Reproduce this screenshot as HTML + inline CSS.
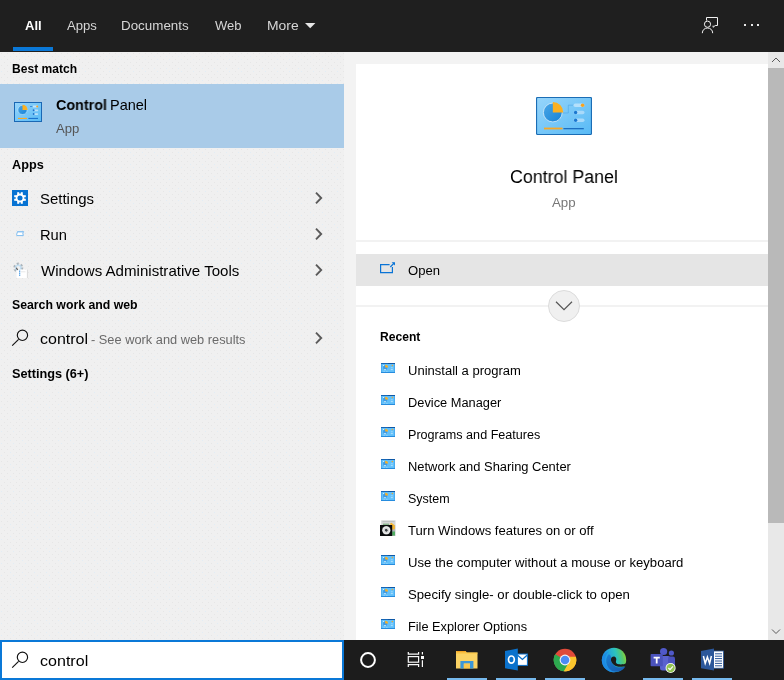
<!DOCTYPE html>
<html><head><meta charset="utf-8">
<style>
*{box-sizing:border-box;margin:0;padding:0}
html,body{width:784px;height:680px;overflow:hidden;background:#f2f2f2;font-family:"Liberation Sans",sans-serif;color:#000}
.abs{position:absolute}
svg{position:absolute;overflow:visible}
#hdr{position:absolute;left:0;top:0;width:784px;height:52px;background:#1f1f1f}
.t{will-change:transform;position:absolute;white-space:nowrap;line-height:1;transform-origin:0 0}
.tab{font-size:13.5px;color:#d8d8d8;top:19px}
#left{position:absolute;left:0;top:52px;width:344px;height:588px;background:#f0f0f0}
#right{position:absolute;left:344px;top:52px;width:440px;height:588px;background:#f3f3f3}
#card{position:absolute;left:356px;top:64px;width:412px;height:576px;background:#fff}
.sec{font-size:13px;font-weight:bold;color:#111;left:12px}
.item{font-size:15px;color:#111;left:40px}
.rec{font-size:13px;color:#111;left:408px}
#task{position:absolute;left:0;top:640px;width:784px;height:40px;background:#1c1c1c}
.ul{position:absolute;top:678px;height:2px;width:40px;background:#76b9ed}
</style></head><body>
<div id="hdr"></div>
<div class="abs" style="left:13px;top:47px;width:40px;height:4px;background:#0a78d7"></div>
<svg style="left:304.6px;top:23px" width="10.4" height="5.2"><path d="M0 0H10.4L5.2 5.2Z" fill="#e6e6e6"/></svg>
<!-- feedback icon -->
<svg style="left:700px;top:14px" width="22" height="22" fill="none" stroke="#f0f0f0" stroke-width="1"><path d="M6.5 6.6V3.5H17.5V11.5H15.2L13.1 13.3V11.6"/><circle cx="7.5" cy="10.2" r="3.1"/><path d="M2.3 19.2C2.3 16 4.6 14 7.5 14C10.4 14 12.7 16 12.7 19.2"/></svg>
<div class="abs" style="left:744px;top:24px;width:2px;height:2px;background:#e8e8e8"></div>
<div class="abs" style="left:751px;top:24px;width:2px;height:2px;background:#e8e8e8"></div>
<div class="abs" style="left:757px;top:24px;width:2px;height:2px;background:#e8e8e8"></div>

<div id="left"></div>
<svg style="left:0;top:52px" width="344" height="588"><defs><pattern id="nz" width="12" height="12" patternUnits="userSpaceOnUse"><rect x="1" y="1" width="1" height="1" fill="#e6e6e6"/><rect x="7" y="1" width="1" height="1" fill="#e6e6e6"/><rect x="4" y="4" width="1" height="1" fill="#e6e6e6"/><rect x="10" y="4" width="1" height="1" fill="#e2edf5"/><rect x="1" y="7" width="1" height="1" fill="#e2edf5"/><rect x="7" y="7" width="1" height="1" fill="#e6e6e6"/><rect x="4" y="10" width="1" height="1" fill="#e6e6e6"/><rect x="10" y="10" width="1" height="1" fill="#e6e6e6"/></pattern></defs><rect width="344" height="588" fill="url(#nz)"/></svg>
<div id="right"></div>
<div id="card"></div>

<!-- left column -->
<div class="abs" style="left:0;top:84px;width:344px;height:64px;background:#a9cbe8"></div>

<!-- chevrons -->
<svg style="left:314px;top:191px" width="10" height="14" fill="none" stroke="#5a5a5a" stroke-width="1.9"><path d="M2 1.7L7.2 7L2 12.3"/></svg>
<svg style="left:314px;top:227px" width="10" height="14" fill="none" stroke="#5a5a5a" stroke-width="1.9"><path d="M2 1.7L7.2 7L2 12.3"/></svg>
<svg style="left:314px;top:263px" width="10" height="14" fill="none" stroke="#5a5a5a" stroke-width="1.9"><path d="M2 1.7L7.2 7L2 12.3"/></svg>
<svg style="left:314px;top:331px" width="10" height="14" fill="none" stroke="#5a5a5a" stroke-width="1.9"><path d="M2 1.7L7.2 7L2 12.3"/></svg>

<!-- right card -->
<div class="abs" style="left:356px;top:240px;width:412px;height:2px;background:#f2f2f2"></div>
<div class="abs" style="left:356px;top:254px;width:412px;height:32px;background:#e5e5e5"></div>
<div class="abs" style="left:356px;top:305px;width:412px;height:2px;background:#f2f2f2"></div>
<div class="abs" style="left:548px;top:290px;width:32px;height:32px;border-radius:50%;background:#f0f0f0;border:1px solid #dcdcdc"></div>
<svg style="left:555px;top:300px" width="18" height="12" fill="none" stroke="#555" stroke-width="1.2"><path d="M1 1.8L9 9.6L17 1.8"/></svg>

<svg width="0" height="0" style="left:0;top:0"><defs>
<linearGradient id="cpg" x1="0" y1="0" x2="1" y2="1"><stop offset="0" stop-color="#97d5fb"/><stop offset="1" stop-color="#58baf5"/></linearGradient>
<linearGradient id="pieg" x1="0" y1="0" x2="1" y2="1"><stop offset="0" stop-color="#4aa6e6"/><stop offset="1" stop-color="#1783d8"/></linearGradient>
<symbol id="cp" viewBox="0 0 56 38">
<rect x="0.5" y="0.5" width="55" height="37" rx="1.2" fill="url(#cpg)" stroke="#1b6db5" stroke-width="1.2"/>
<path d="M26.5 16H32.3V8.2H38" fill="none" stroke="#4ea6e6" stroke-width="0.6"/>
<circle cx="16.8" cy="15.5" r="9.4" fill="url(#pieg)" stroke="#eaf4fb" stroke-width="0.7"/>
<path d="M16.8 15.5V5A10.5 10.5 0 0 1 27.3 15.5Z" fill="#fbb021"/>
<rect x="37.5" y="6.4" width="11" height="3.6" rx="1.8" fill="#b5e0fb"/>
<circle cx="46.6" cy="8.2" r="1.8" fill="#f9a31f"/>
<rect x="37.5" y="13.7" width="11" height="3.6" rx="1.8" fill="#a9dafa"/>
<circle cx="39.6" cy="15.5" r="1.7" fill="#1a77cf"/>
<rect x="37.5" y="21.5" width="11" height="3.6" rx="1.8" fill="#a9dafa"/>
<circle cx="39.6" cy="23.3" r="1.7" fill="#1a77cf"/>
<rect x="8" y="30.6" width="18.5" height="1.8" fill="#f9a825"/>
<rect x="27.4" y="31" width="20.4" height="1.3" fill="#1c6fc0"/>
</symbol>
<symbol id="cps" viewBox="0 0 14 10">
<rect x="0" y="0" width="14" height="10" fill="#3e9fe8"/>
<rect x="0.6" y="0.8" width="12.8" height="8.4" fill="#62c0fa"/>
<rect x="0" y="0" width="14" height="1" fill="#1565b5"/><rect x="7" y="0" width="7" height="1" fill="#0e58a6"/>
<rect x="0" y="9.1" width="14" height="0.9" fill="#2389dd"/>
<circle cx="4.2" cy="4.8" r="2.2" fill="#3d9be6"/>
<path d="M4.2 4.6V1.7A2.9 2.9 0 0 1 7.1 4.6Z" fill="#fbb021"/>
<circle cx="11.4" cy="2.6" r="0.75" fill="#f6a52a"/>
<rect x="2" y="2" width="0.9" height="0.9" fill="#e8f5fd"/>
<rect x="3" y="6.3" width="2" height="0.8" fill="#dff1fd"/>
<rect x="9.8" y="4.4" width="2" height="0.8" fill="#a9dcfb"/>
<rect x="9.8" y="6.3" width="2" height="0.8" fill="#c9e9fc"/>
<rect x="2.4" y="8" width="1.6" height="0.6" fill="#9bd6fb"/><rect x="5" y="8" width="1.6" height="0.6" fill="#9bd6fb"/>
</symbol>
<symbol id="cpm" viewBox="0 0 28 20">
<rect x="0.5" y="0.5" width="27" height="19" fill="url(#cpg)" stroke="#1a68b4" stroke-width="1"/>
<circle cx="8.5" cy="7.9" r="4.6" fill="url(#pieg)" stroke="#dff0fb" stroke-width="0.5"/>
<path d="M8.5 7.9V2.8A5.1 5.1 0 0 1 13.6 7.9Z" fill="#fbb021"/>
<rect x="18.6" y="3.6" width="5.6" height="1.8" rx="0.9" fill="#c4e6fb"/><circle cx="23.2" cy="4.5" r="1" fill="#f9a31f"/><rect x="16" y="4.1" width="2.4" height="0.8" fill="#2a80d4"/>
<rect x="18.6" y="7.4" width="5.6" height="1.8" rx="0.9" fill="#b9e1fb"/><circle cx="19.6" cy="8.3" r="1" fill="#1a72cc"/>
<rect x="18.6" y="11.2" width="5.6" height="1.8" rx="0.9" fill="#b9e1fb"/><circle cx="19.6" cy="12.1" r="1" fill="#1a72cc"/>
<rect x="4" y="15.9" width="9" height="1.1" fill="#f9a825"/><rect x="14.4" y="15.9" width="9.6" height="1.1" fill="#1b74cf"/>
</symbol>
</defs></svg>
<!-- control panel icons -->
<svg style="left:536px;top:97px" width="56" height="38"><use href="#cp"/></svg>
<svg style="left:14px;top:102px" width="28" height="20"><use href="#cpm"/></svg>
<svg style="left:381px;top:363px" width="14" height="10"><use href="#cps"/></svg>
<svg style="left:381px;top:395px" width="14" height="10"><use href="#cps"/></svg>
<svg style="left:381px;top:427px" width="14" height="10"><use href="#cps"/></svg>
<svg style="left:381px;top:459px" width="14" height="10"><use href="#cps"/></svg>
<svg style="left:381px;top:491px" width="14" height="10"><use href="#cps"/></svg>
<svg style="left:381px;top:555px" width="14" height="10"><use href="#cps"/></svg>
<svg style="left:381px;top:587px" width="14" height="10"><use href="#cps"/></svg>
<svg style="left:381px;top:619px" width="14" height="10"><use href="#cps"/></svg>
<!-- windows features icon -->
<svg style="left:380px;top:520px" width="16" height="16">
<defs><radialGradient id="dg"><stop offset="0.25" stop-color="#3a3f42"/><stop offset="0.36" stop-color="#c9cbcc"/><stop offset="0.8" stop-color="#eeeeee"/><stop offset="1" stop-color="#b9bcbd"/></radialGradient>
</defs>
<path d="M1.2 0.3H15.5V5H1.2Z" fill="#d4d6d6"/>
<path d="M2.5 1H14.5V2H2.5Z" fill="#bfc2c2"/>
<rect x="12" y="5" width="3.4" height="11" fill="#b4b8ba"/>
<rect x="3" y="3.6" width="6" height="1.4" fill="#6aa56c" opacity="0.7"/>
<path d="M9.5 4.2L11.3 2.8L13 4L14.8 5.5V9L12.2 9.8V5.2Z" fill="#f8b62a"/>
<rect x="12.2" y="11.5" width="2.8" height="4" fill="#3fae55" opacity="0.85"/>
<rect x="0" y="5" width="12.2" height="11" fill="#0b0d0e"/>
<circle cx="6.3" cy="10.3" r="4.2" fill="url(#dg)"/>
</svg>
<!-- left icons -->
<svg style="left:12px;top:190px" width="16" height="16">
<rect width="16" height="16" fill="#0773d3"/>
<g fill="#fff"><rect x="5.2" y="2.2" width="2" height="3.2"/><rect x="8.8" y="2.2" width="2" height="3.2"/><rect x="5.2" y="10.6" width="2" height="3.2"/><rect x="8.8" y="10.6" width="2" height="3.2"/><rect x="2.2" y="5.2" width="3.2" height="2"/><rect x="2.2" y="8.8" width="3.2" height="2"/><rect x="10.6" y="5.2" width="3.2" height="2"/><rect x="10.6" y="8.8" width="3.2" height="2"/></g>
<circle cx="8" cy="8" r="3.5" fill="none" stroke="#fff" stroke-width="1.8"/>
</svg>
<svg style="left:15px;top:229px" width="11" height="9">
<path d="M2.6 2.6H8.6L7.8 4L8.3 6.6H1.8L1.7 5.2Z" fill="#ffffff" stroke="#7dbcf0" stroke-width="1" stroke-linejoin="round"/>
<path d="M2.4 2.8H8.4" stroke="#8ec4f2" stroke-width="1.2"/>
</svg>
<svg style="left:12px;top:262px" width="17" height="17">
<circle cx="6.3" cy="5.6" r="3.8" fill="none" stroke="#9aa5ae" stroke-width="2.4" stroke-dasharray="2 1.98" opacity="0.8"/>
<circle cx="6.3" cy="5.8" r="2.6" fill="none" stroke="#b9dcf4" stroke-width="1.4" opacity="0.8"/>
<rect x="4.6" y="7.6" width="11" height="8.4" fill="#fff"/>
<path d="M15.4 7.6V16" stroke="#d0d0d0" stroke-width="0.8"/>
<path d="M4.3 5.8L5.6 8" stroke="#555" stroke-width="1.2"/>
<rect x="7" y="8.6" width="1.3" height="1.1" fill="#2a8ae0"/><rect x="7" y="10.6" width="1.3" height="1.1" fill="#2a8ae0"/><rect x="7" y="12.6" width="1.3" height="1.1" fill="#2a8ae0"/>
<path d="M9 9.8H13.5" stroke="#ddd" stroke-width="0.7"/>
</svg>
<svg style="left:10px;top:328px" width="20" height="20" fill="none" stroke="#111" stroke-width="1.15"><circle cx="12.45" cy="7.3" r="5.15"/><path d="M8.6 11.3L2.2 17.6"/></svg>
<!-- open icon -->
<svg style="left:379px;top:261px" width="18" height="14"><path d="M10.6 3.6H1.6V11.7H13.4V6" fill="none" stroke="#0a74d6" stroke-width="1.2"/><path d="M11.3 6L15.2 2" stroke="#0a74d6" stroke-width="1.1"/><path d="M12.6 1.2H16V4.6Z" fill="#0a74d6"/></svg>
<!-- scrollbar -->
<div class="abs" style="left:768px;top:52px;width:16px;height:588px;background:#e8e8e8"></div>
<div class="abs" style="left:768px;top:68px;width:16px;height:455px;background:#b9b9b9"></div>
<svg style="left:771px;top:56px" width="10" height="8" fill="none" stroke="#5a5a5a" stroke-width="1"><path d="M1 6L5 2L9 6"/></svg>
<svg style="left:771px;top:628px" width="10" height="8" fill="none" stroke="#5a5a5a" stroke-width="1"><path d="M1 1.5L5 5.5L9 1.5"/></svg>

<!-- taskbar -->
<div id="task"></div>
<div class="abs" style="left:0;top:640px;width:344px;height:40px;background:#fff;border:2px solid #0a78d7"></div>
<svg style="left:10px;top:650px" width="20" height="20" fill="none" stroke="#111" stroke-width="1.15"><circle cx="12.45" cy="7.3" r="5.15"/><path d="M8.6 11.3L2.2 17.6"/></svg>
<!-- taskbar icons -->
<svg style="left:360px;top:652px" width="16" height="16"><circle cx="8" cy="8" r="6.9" fill="none" stroke="#fff" stroke-width="2"/></svg>
<svg style="left:406px;top:651px" width="20" height="18" fill="none" stroke="#fafafa" stroke-width="1.2">
<rect x="2.3" y="5.6" width="10.3" height="5.6"/><path d="M2.3 0.9V3.2H12.6V0.9M2.3 16V13.6H12.6V16"/>
<path d="M16.4 1V3.4M16.4 9.2V16" stroke-width="1.2"/><rect x="15" y="5" width="3" height="3" fill="#fafafa" stroke="none"/></svg>
<!-- explorer -->
<svg style="left:456px;top:650px" width="22" height="19">
<path d="M0 1H9.5L10.8 2.6H21.5V18.4H0Z" fill="#fbd364"/>
<path d="M0.3 1H9.5L10.6 2.6H0.3Z" fill="#f5a623"/>
<rect x="0" y="2.6" width="21.5" height="1" fill="#f8c445"/>
<path d="M4.4 11H17.4V18.4H14V13.6H7.8V18.4H4.4Z" fill="#3b97d8"/>
<rect x="7.8" y="13.6" width="6.2" height="4.8" fill="#f9c84e"/>
</svg>
<!-- outlook -->
<svg style="left:504px;top:647px" width="24" height="25">
<rect x="13" y="7" width="10.4" height="11.4" fill="#fff" stroke="#0a6fc9" stroke-width="1"/>
<path d="M13.6 8.2L18.4 12.4L23 8.2" fill="none" stroke="#0a6fc9" stroke-width="1.3"/>
<path d="M1 4L13.8 1.6V23.6L1 21.2Z" fill="#0b72cc"/>
<ellipse cx="7.4" cy="12.6" rx="2.9" ry="3.6" fill="none" stroke="#fff" stroke-width="1.7"/>
</svg>
<!-- chrome -->
<svg style="left:553px;top:648px" width="24" height="24" viewBox="-12 -12 24 24">
<circle r="11.2" fill="#e04a3a"/>
<path d="M-9.79 -5.65A11.3 11.3 0 0 0 1.2 11.24L5.2 3L0 0Z" fill="#2da94f"/>
<path d="M-9.79 -5.65A11.3 11.3 0 0 0 -1.5 11.2L4.9 0H-5.5Z" fill="#2da94f"/>
<path d="M11.2 -1.5A11.3 11.3 0 0 1 -1.2 11.24L4.6 1.2L4.9 -3.3H11Z" fill="#fbc52d"/>
<path d="M10.9 -3A11.3 11.3 0 0 1 -0.6 11.28L5 1L5.2 -3Z" fill="#fbc52d"/>
<circle r="5.4" fill="#f4f4f4"/><circle r="4.3" fill="#4c8bf5"/>
</svg>
<!-- edge -->
<svg style="left:601px;top:647px" width="26" height="26" viewBox="-13 -13 26 26">
<defs><linearGradient id="eg1" x1="0" y1="0.6" x2="1" y2="0.35"><stop offset="0" stop-color="#1e8fe6"/><stop offset="0.3" stop-color="#23a0e0"/><stop offset="0.62" stop-color="#2cc3be"/><stop offset="0.85" stop-color="#56c96e"/><stop offset="1" stop-color="#8ed436"/></linearGradient>
<linearGradient id="eg2" x1="0" y1="0" x2="0.6" y2="1"><stop offset="0" stop-color="#1a7fd4"/><stop offset="1" stop-color="#175fb3"/></linearGradient></defs>
<circle r="12.2" fill="url(#eg1)"/>
<path d="M-12.2 0.8A12.2 12.2 0 0 0 3 11.8C-3 11.5 -9.5 6.5 -9 -1C-8.7 -4.5 -7 -7 -5 -8.4C-9.5 -7 -12.2 -3.5 -12.2 0.8Z" fill="#1d8be4"/>
<path d="M-5.2 -5.8C-9.5 -1.5 -8.5 7 -2 11C3 13.2 9.5 10.8 11.3 6.3C7 8 2.5 7.6 0.2 5.4C-2 3.4 -3.6 1 -3 -1.6C-2.6 -3.6 -3.8 -5.6 -5.2 -5.8Z" fill="url(#eg2)"/>
<path d="M-3 -1C-2.6 -3 -0.6 -3.8 0.8 -3.2C2.4 -2.4 2.6 -0.6 2 1C1.4 2.6 2.6 4 5 4.3C7.6 4.6 10.4 4.2 12.4 3.2L12.6 5.4C10.5 6.4 6 7.4 2.4 6.2C-0.8 5 -3.4 2.2 -3 -1Z" fill="#1c1c1c"/>
</svg>
<!-- teams -->
<svg style="left:649px;top:646px" width="30" height="28">
<circle cx="14.6" cy="5.5" r="3.6" fill="#5059c9"/><circle cx="22.4" cy="7" r="2.6" fill="#5059c9"/>
<rect x="11" y="10" width="10.5" height="14.4" rx="2.5" fill="#5a62cf"/>
<rect x="19" y="10.4" width="7" height="10.5" rx="2" fill="#4a52bd"/>
<rect x="1.6" y="8" width="12.2" height="12.2" rx="0.8" fill="#4b53bc"/>
<path d="M4.6 10.8H10.8V12.4H8.6V17.6H6.8V12.4H4.6Z" fill="#fff"/>
<circle cx="21.6" cy="22" r="5" fill="#fff"/><circle cx="21.6" cy="22" r="4.2" fill="#92c353"/>
<path d="M19.4 22L21 23.6L23.9 20.4" fill="none" stroke="#fff" stroke-width="1.2"/>
</svg>
<!-- word -->
<svg style="left:700px;top:647px" width="25" height="25">
<rect x="12" y="4" width="11.4" height="17.2" fill="#fff" stroke="#2b579a" stroke-width="0.8"/>
<path d="M15 6.8H22M15 9.2H22M15 11.6H22M15 14H22M15 16.4H22M15 18.8H22" stroke="#2b579a" stroke-width="1"/>
<path d="M1 4L14 1.6V23.6L1 21.2Z" fill="#2b579a"/>
<path d="M3.4 9L5.2 16.4L7.4 10L9.6 16.4L11.4 9" fill="none" stroke="#fff" stroke-width="1.5" stroke-linejoin="miter"/>
</svg>
<div class="ul" style="left:447px"></div>
<div class="ul" style="left:496px"></div>
<div class="ul" style="left:545px"></div>
<div class="ul" style="left:643px"></div>
<div class="ul" style="left:692px"></div>
<div class="t" id="t_all" style="left:25.00px;top:19.00px;font-size:13px;color:#ffffff;font-weight:bold;">All</div>
<div class="t" id="t_apps" style="left:66.78px;top:19.00px;font-size:13px;color:#d6d6d6;transform:scaleX(1.0070);">Apps</div>
<div class="t" id="t_docs" style="left:120.95px;top:19.00px;font-size:13px;color:#d6d6d6;transform:scaleX(1.0295);">Documents</div>
<div class="t" id="t_web" style="left:214.81px;top:19.00px;font-size:13px;color:#d6d6d6;transform:scaleX(0.9910);">Web</div>
<div class="t" id="t_more" style="left:266.69px;top:19.00px;font-size:13px;color:#d6d6d6;transform:scaleX(1.0677);">More</div>
<div class="t" id="s_best" style="left:12.04px;top:63.00px;font-size:12px;color:#000;font-weight:bold;transform:scaleX(1.0053);">Best match</div>
<div class="t" id="i_cpb" style="left:55.59px;top:98.00px;font-size:14.5px;color:#000;font-weight:bold;transform:scaleX(0.9878);">Control</div>
<div class="t" id="i_cpp" style="left:109.78px;top:98.00px;font-size:14.5px;color:#000;transform:scaleX(0.9948);">Panel</div>
<div class="t" id="i_app" style="left:56.39px;top:123.00px;font-size:12.5px;color:#555;transform:scaleX(1.0489);">App</div>
<div class="t" id="s_apps" style="left:11.53px;top:159.00px;font-size:12px;color:#000;font-weight:bold;transform:scaleX(1.0561);">Apps</div>
<div class="t" id="i_set" style="left:39.57px;top:192.00px;font-size:14.5px;color:#000;transform:scaleX(1.0318);">Settings</div>
<div class="t" id="i_run" style="left:39.64px;top:228.00px;font-size:14.5px;color:#000;transform:scaleX(1.0145);">Run</div>
<div class="t" id="i_wat" style="left:40.94px;top:264.00px;font-size:14.5px;color:#000;transform:scaleX(1.0400);">Windows Administrative Tools</div>
<div class="t" id="s_sww" style="left:11.69px;top:299.00px;font-size:12px;color:#000;font-weight:bold;transform:scaleX(1.0231);">Search work and web</div>
<div class="t" id="i_ctl" style="left:39.86px;top:332.00px;font-size:14.5px;color:#000;transform:scaleX(1.1036);">control</div>
<div class="t" id="i_see" style="left:90.81px;top:334.00px;font-size:12.5px;color:#6a6a6a;transform:scaleX(1.0247);">- See work and web results</div>
<div class="t" id="s_set" style="left:11.65px;top:368.00px;font-size:12px;color:#000;font-weight:bold;transform:scaleX(1.0572);">Settings (6+)</div>
<div class="t" id="r_title" style="left:510.20px;top:168.00px;font-size:18px;color:#000;transform:scaleX(0.9899);">Control Panel</div>
<div class="t" id="r_app" style="left:551.78px;top:197.00px;font-size:12.5px;color:#777;transform:scaleX(1.0633);">App</div>
<div class="t" id="r_open" style="left:407.57px;top:265.00px;font-size:12.5px;color:#000;transform:scaleX(1.0465);">Open</div>
<div class="t" id="r_recent" style="left:379.80px;top:331.00px;font-size:12px;color:#000;font-weight:bold;transform:scaleX(1.0082);">Recent</div>
<div class="t" id="r1" style="left:407.60px;top:365.00px;font-size:12.5px;color:#000;transform:scaleX(1.0424);">Uninstall a program</div>
<div class="t" id="r2" style="left:408.04px;top:397.00px;font-size:12.5px;color:#000;transform:scaleX(1.0250);">Device Manager</div>
<div class="t" id="r3" style="left:407.56px;top:429.00px;font-size:12.5px;color:#000;transform:scaleX(1.0080);">Programs and Features</div>
<div class="t" id="r4" style="left:407.85px;top:461.00px;font-size:12.5px;color:#000;transform:scaleX(1.0326);">Network and Sharing Center</div>
<div class="t" id="r5" style="left:407.60px;top:493.00px;font-size:12.5px;color:#000;transform:scaleX(0.9995);">System</div>
<div class="t" id="r6" style="left:408.28px;top:525.00px;font-size:12.5px;color:#000;transform:scaleX(1.0474);">Turn Windows features on or off</div>
<div class="t" id="r7" style="left:408.04px;top:557.00px;font-size:12.5px;color:#000;transform:scaleX(1.0486);">Use the computer without a mouse or keyboard</div>
<div class="t" id="r8" style="left:407.93px;top:589.00px;font-size:12.5px;color:#000;transform:scaleX(1.0541);">Specify single- or double-click to open</div>
<div class="t" id="r9" style="left:407.56px;top:621.00px;font-size:12.5px;color:#000;transform:scaleX(1.0201);">File Explorer Options</div>
<div class="t" id="tb_ctl" style="left:39.53px;top:654.00px;font-size:14.5px;color:#000;transform:scaleX(1.1076);">control</div>
</body></html>
